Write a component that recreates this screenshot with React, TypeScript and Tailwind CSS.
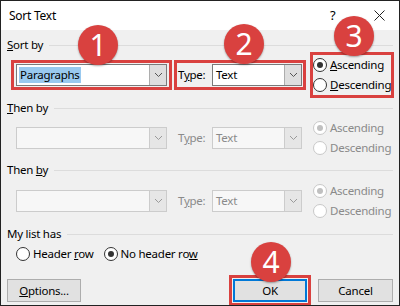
import React from "react";

const RED = "border-[#d9413f]";

function Chevron({ disabled }: { disabled?: boolean }) {
    return (
        <svg width="9" height="6" viewBox="0 0 9 6" fill="none">
            <path d="M1 1 L4.5 4.5 L8 1" stroke={disabled ? "#9a9a9a" : "#555"} strokeWidth="1" />
        </svg>
    );
}

function Combo({ value, width, disabled, selected }: { value?: string; width: string; disabled?: boolean; selected?: boolean }) {
    return (
        <div className={`${width} h-[22px] flex border ${disabled ? "border-[#cccccc] bg-[#f7f7f7]" : "border-[#7a7a7a] bg-white"}`}>
            <div className="flex-1 flex items-center pl-[2px]">
                {value && (
                    <span className={`px-[1px] leading-[16px] ${selected ? "bg-[#99c9ef] text-black" : disabled ? "text-[#8a8a8a]" : "text-black"}`}>
                        {value}
                    </span>
                )}
            </div>
            <div className={`w-[17px] flex items-center justify-center border-l ${disabled ? "border-[#cccccc] bg-[#e6e6e6]" : "border-[#adadad] bg-[#dedede]"}`}>
                <Chevron disabled={disabled} />
            </div>
        </div>
    );
}

function Radio({ checked, disabled, children }: { checked?: boolean; disabled?: boolean; children: React.ReactNode }) {
    return (
        <div className="flex items-center gap-[3px] h-[20px] whitespace-nowrap">
            <div className={`shrink-0 w-[14px] h-[14px] rounded-full border flex items-center justify-center ${disabled ? "border-[#c8c8c8] bg-white" : "border-[#333] bg-white"}`}>
                {checked && <div className={`w-[6px] h-[6px] rounded-full ${disabled ? "bg-[#c0c0c0]" : "bg-[#333]"}`} />}
            </div>
            <span className={disabled ? "text-[#8a8a8a]" : "text-black"}>{children}</span>
        </div>
    );
}

function Header({ children, className }: { children: React.ReactNode; className: string }) {
    return (
        <div className={`flex items-center gap-[6px] h-[16px] ${className}`}>
            <span>{children}</span>
            <div className="flex-1 h-px bg-[#dcdcdc]" />
        </div>
    );
}

function Badge({ n, className }: { n: number; className: string }) {
    return (
        <div className={`absolute w-[40px] h-[40px] rounded-full bg-[#d9413f] text-white text-[30px] tracking-normal leading-none flex items-center justify-center shadow-[0_1px_2px_rgba(0,0,0,0.35)] ${className}`}>
            {n}
        </div>
    );
}

function SortRow({ first, value, className }: { first?: boolean; value?: string; className: string }) {
    const box = first ? RED : "border-transparent";
    const disabled = !first;
    return (
        <div className={`flex items-center ${className}`}>
            <div className={`ml-[4px] border-[3px] ${box} p-[2px] h-[30px] flex items-center`}>
                <Combo width="w-[151px]" value={value} selected={first} disabled={disabled} />
            </div>
            <div className={`ml-[2px] border-[3px] ${box} h-[30px] flex items-center pl-[1px] pr-[1px]`}>
                <span className={`w-[34px] ${disabled ? "text-[#8a8a8a]" : ""}`}>
                    T<span className="underline">y</span>pe:
                </span>
                <Combo width="w-[90px]" value="Text" disabled={disabled} />
            </div>
            <div className={`ml-[4px] border-[3px] ${box} h-[46px] w-[84px] flex flex-col justify-center`}>
                <Radio checked disabled={disabled}>
                    {first ? <><span className="underline">A</span>scending</> : "Ascending"}
                </Radio>
                <Radio disabled={disabled}>
                    {first ? <><span className="underline">D</span>escending</> : "Descending"}
                </Radio>
            </div>
        </div>
    );
}

export default function App() {
    return (
        <div
            className="relative w-[400px] h-[306px] border border-[#222] flex flex-col text-[11.5px] tracking-[-0.25px] text-black overflow-hidden"
            style={{ fontFamily: '"Noto Sans", "Open Sans", sans-serif' }}
        >
            <div className="h-[29px] bg-white flex items-center pl-[8px]">
                <span className="flex-1 text-[12px]">Sort Text</span>
                <span className="w-[12px] text-[13px] mr-[32px]">?</span>
                <svg width="11" height="11" viewBox="0 0 11 11" className="mr-[14px]">
                    <path d="M0.5 0.5 L10.5 10.5 M10.5 0.5 L0.5 10.5" stroke="#222" strokeWidth="1" />
                </svg>
            </div>
            <div className="flex-1 bg-[#f0f0f0] px-[6px] flex flex-col">
                <Header className="mt-[7px]">
                    <span className="underline">S</span>ort by
                </Header>
                <SortRow first value="Paragraphs" className="-mt-[1px] h-[46px]" />
                <Header className="mt-[2px]">
                    <span className="underline">T</span>hen by
                </Header>
                <SortRow className="mt-[2px] h-[40px]" />
                <Header className="mt-[4px]">
                    Then <span className="underline">b</span>y
                </Header>
                <SortRow className="mt-[3px] h-[40px]" />
                <Header className="mt-[5px]">My list has</Header>
                <div className="mt-[4px] h-[16px] flex items-center pl-[9px] gap-[10px]">
                    <Radio>
                        Header <span className="underline">r</span>ow
                    </Radio>
                    <Radio checked>
                        No header ro<span className="underline">w</span>
                    </Radio>
                </div>
                <div className="mt-[13px] h-[30px] flex items-start">
                    <button className="mt-[4px] w-[74px] h-[23px] bg-[#e1e1e1] border border-[#adadad]">
                        <span className="underline">O</span>ptions...
                    </button>
                    <div className={`ml-auto border-[3px] ${RED} p-[1px]`}>
                        <button className="block w-[74px] h-[23px] bg-[#e1e1e1] border-2 border-[#0078d7]">OK</button>
                    </div>
                    <button className="mt-[4px] ml-[7px] w-[75px] h-[23px] bg-[#e1e1e1] border border-[#adadad]">
                        Cancel
                    </button>
                </div>
            </div>
            <Badge n={1} className="left-[77px] top-[24px]" />
            <Badge n={2} className="left-[223px] top-[23px]" />
            <Badge n={3} className="left-[333px] top-[15px]" />
            <Badge n={4} className="left-[250px] top-[241px]" />
        </div>
    );
}
